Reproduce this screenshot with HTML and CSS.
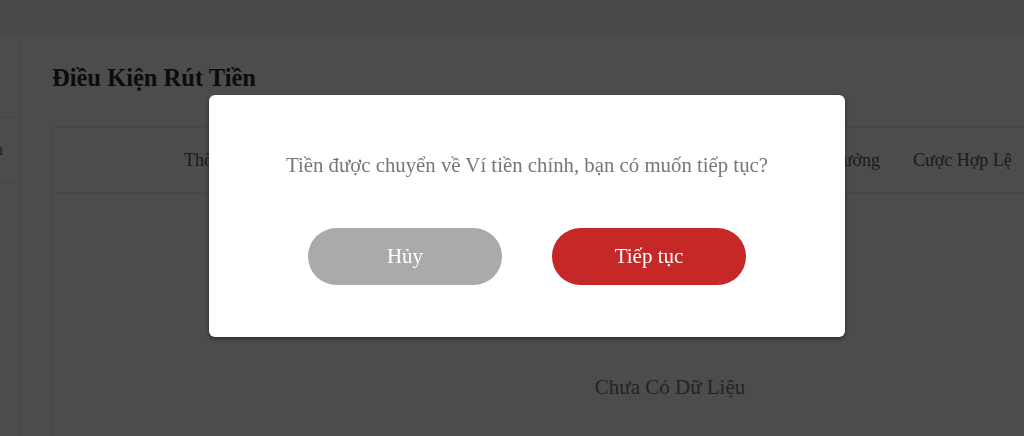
FILE: index.html
```html
<!DOCTYPE html>
<html lang="vi">
<head>
<meta charset="utf-8">
<title>Điều Kiện Rút Tiền</title>
<link rel="stylesheet" href="styles.css">
</head>
<body>
<div class="page">
  <aside class="sidebar">
    <div class="side-top"></div>
    <div class="side-item"><span>Rút Tiền</span></div>
    <div class="side-rest"></div>
  </aside>
  <main class="card">
    <h1 class="title">Điều Kiện Rút Tiền</h1>
    <div class="table">
      <div class="thead">
        <span class="th th-first">Thời Gian</span>
        <span class="th th-mid">
          <span>Loại Khuyến Mãi</span>
          <span>Số Tiền Nạp</span>
        </span>
        <span class="th th-bonus">Tiền Thưởng</span>
        <span class="th">Cược Hợp Lệ</span>
      </div>
      <div class="empty">Chưa Có Dữ Liệu</div>
    </div>
  </main>
</div>

<div class="overlay">
  <div class="modal">
    <p class="msg">Tiền được chuyển về Ví tiền chính, bạn có muốn tiếp tục?</p>
    <div class="actions">
      <button class="btn btn-cancel">Hủy</button>
      <button class="btn btn-ok">Tiếp tục</button>
    </div>
  </div>
</div>
</body>
</html>
```

FILE: styles.css
```css
* { box-sizing: border-box; }
html, body {
  margin: 0;
  padding: 0;
  width: 1024px;
  height: 436px;
  overflow: hidden;
  background: #f6f6f6;
  font-family: "Liberation Serif", "Times New Roman", serif;
}
.page {
  display: flex;
  padding-top: 36px;
  height: 436px;
}
.sidebar {
  width: 20px;
  flex: none;
  background: #fff;
  border-right: 1px solid #ececec;
  display: flex;
  flex-direction: column;
  overflow: hidden;
}
.side-top { height: 82px; border-bottom: 1px solid #e6e6e6; }
.side-item {
  height: 65px;
  border-bottom: 1px solid #e6e6e6;
  display: flex;
  align-items: center;
  justify-content: flex-end;
  font-size: 17px;
  color: #666;
  white-space: nowrap;
}
.side-item span { margin-right: 16px; margin-left: -200px; }
.side-rest { flex: 1; }
.card {
  flex: none;
  width: 1300px;
  background: #fff;
  padding: 27px 0 0 32px;
}
.title {
  margin: 0 0 34px;
  font-size: 24.5px;
  line-height: 30px;
  font-weight: bold;
  color: #2a2a2a;
}
.table {
  width: 1236px;
  height: 400px;
  border: 1px solid #ececec;
}
.thead {
  height: 65px;
  border-bottom: 1px solid #ececec;
  display: flex;
  align-items: center;
  gap: 33px;
  padding-left: 131px;
  font-size: 18px;
  color: #5a5a5a;
  white-space: nowrap;
}
.th { flex: none; }
.th-first { width: 70px; overflow: hidden; }
.th-mid {
  width: 464px;
  display: flex;
  justify-content: space-around;
}
.th-bonus {
  width: 96px;
  text-align: right;
}
.empty {
  text-align: center;
  font-size: 21px;
  color: #777;
  padding-top: 182px;
}
.overlay {
  position: fixed;
  inset: 0;
  background: rgba(0, 0, 0, 0.7);
  display: flex;
  align-items: center;
  justify-content: center;
  padding-left: 30px;
  padding-bottom: 4px;
}
.modal {
  width: 636px;
  height: 242px;
  background: #fff;
  border-radius: 6px;
  box-shadow: 0 2px 5px rgba(0, 0, 0, 0.45);
  padding-top: 57px;
  text-align: center;
}
.msg {
  margin: 0 0 51px;
  font-size: 20.8px;
  line-height: 25px;
  color: #777;
}
.actions {
  display: flex;
  justify-content: center;
  gap: 50px;
}
.btn {
  width: 194px;
  height: 57px;
  border: none;
  border-radius: 29px;
  color: #fff;
  font-family: "Liberation Serif", "Times New Roman", serif;
  font-size: 21px;
  cursor: pointer;
}
.btn-cancel { background: #aaaaaa; }
.btn-ok { background: #c62828; }
```
